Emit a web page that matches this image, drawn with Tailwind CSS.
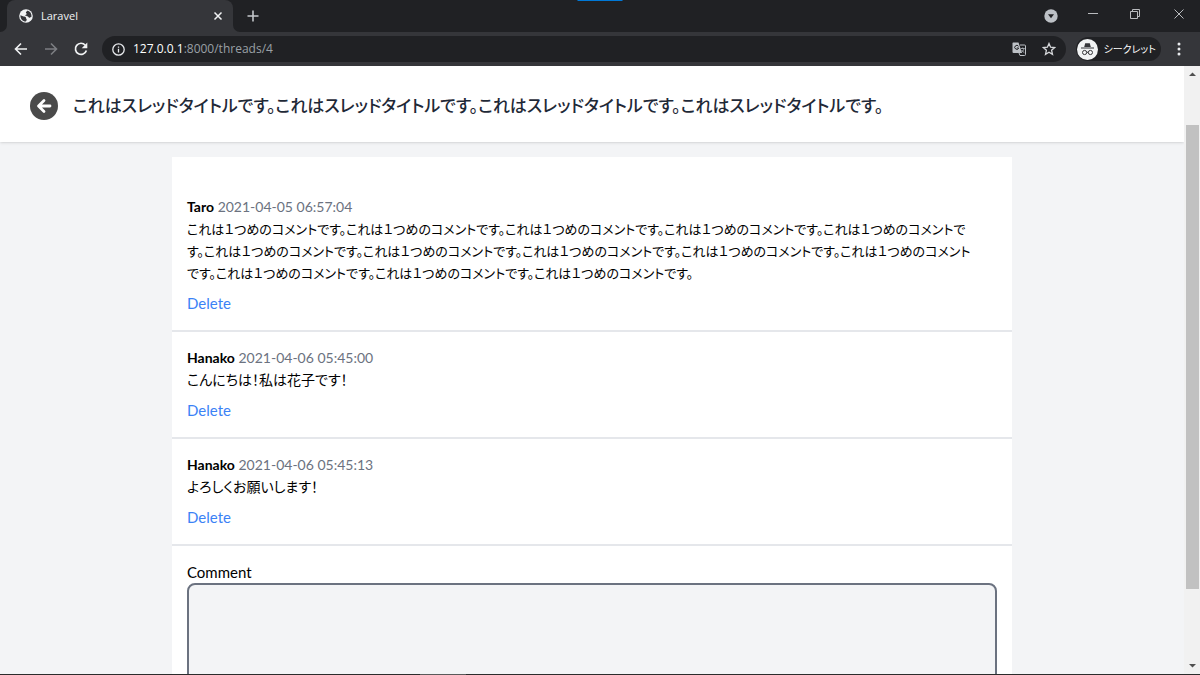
<!DOCTYPE html>
<html lang="ja">
<head>
  <meta charset="UTF-8" />
  <meta name="viewport" content="width=device-width, initial-scale=1.0" />
  <title>Laravel</title>
  <script src="https://cdn.jsdelivr.net/npm/@tailwindcss/browser@4"></script>
</head>
<body class="h-screen flex flex-col overflow-hidden bg-[#202124] font-['Lato','Noto_Sans_CJK_JP',sans-serif]">

  <!-- Tabs -->
  <div class="relative flex h-8 shrink-0 items-center bg-[#202124] font-['Open_Sans','Noto_Sans_CJK_JP',sans-serif]">
    <div class="absolute left-1/2 top-0 h-px w-[45px] -translate-x-1/2 bg-[#0078d7]"></div>
    <div class="relative ml-[7px] flex h-full w-[226px] items-center rounded-t-lg bg-[#35363a] pl-3 pr-[10px]">
      <svg class="absolute -left-[7px] bottom-0 size-[7px]" viewBox="0 0 7 7" fill="#35363a"><path d="M7 0v7H0a7 7 0 0 0 7-7z" /></svg>
      <svg class="absolute -right-[7px] bottom-0 size-[7px]" viewBox="0 0 7 7" fill="#35363a"><path d="M0 0v7h7a7 7 0 0 1-7-7z" /></svg>
      <svg class="size-[14px] shrink-0" viewBox="0 0 14 14">
        <circle cx="7" cy="7" r="6.8" fill="#f1f3f4" />
        <path d="M1.4 6.2 4 7.2c1 .3 1.9.3 2.6.9.6.6.2 1.5.9 2 .5.4.2 1.5-.7 2.4C3.8 12.6 1.2 9.9 1.4 6.2z" fill="#35363a" />
        <path d="M8.6 1.6c-.3 1-1.6.9-1.700 1.900-.1.8.9.8.8 1.500-.1.8-1.500.6-1.300 1.500.2.8 1.700.4 2.600.9.7.4.6 1.400 1.500 1.400.9 0 1.200-.8 2-1 .3-2.900-1.300-5.300-3.900-6.200z" fill="#35363a" />
      </svg>
      <span class="ml-2 grow text-[11px] text-[#f1f3f4]">Laravel</span>
      <button type="button" aria-label="Close tab" class="text-[#f1f3f4]">
        <svg class="size-[10px]" viewBox="0 0 10 10" fill="none" stroke="currentColor" stroke-width="1.5"><path d="M1.5 1.5l7 7M8.5 1.5l-7 7" /></svg>
      </button>
    </div>
    <button type="button" aria-label="New tab" class="ml-[14px] text-[#c4c7cb]">
      <svg class="size-3" viewBox="0 0 12 12" fill="none" stroke="currentColor" stroke-width="1.6"><path d="M6 .5v11M.5 6h11" /></svg>
    </button>
    <div class="ml-auto flex items-center pr-4 text-[#b9bbbe]">
      <button type="button" aria-label="Search tabs" class="mr-[30px]">
        <svg class="size-[14px]" viewBox="0 0 14 14"><circle cx="7" cy="7" r="6.7" fill="#bdc1c6" /><path d="M4 5.200h6L7 9.200z" fill="#202124" /></svg>
      </button>
      <button type="button" aria-label="Minimize" class="mr-8 mb-1">
        <svg class="size-[10px]" viewBox="0 0 10 10" stroke="currentColor"><path d="M0 4.500h10" /></svg>
      </button>
      <button type="button" aria-label="Restore" class="mr-[34px] mb-1">
        <svg class="size-[10px]" viewBox="0 0 10 10" fill="none" stroke="currentColor"><path d="M.5 2.500h7v7h-7zM2.500 2.500v-2h7v7h-2" /></svg>
      </button>
      <button type="button" aria-label="Close" class="mb-1">
        <svg class="size-[10px]" viewBox="0 0 10 10" fill="none" stroke="currentColor"><path d="M.5.5l9 9M9.500.5l-9 9" /></svg>
      </button>
    </div>
  </div>

  <!-- Toolbar -->
  <div class="flex h-[34px] shrink-0 items-center bg-[#35363a] pl-[14px] pr-[19px] font-['Open_Sans','Noto_Sans_CJK_JP',sans-serif]">
    <button type="button" aria-label="Back" class="text-[#f1f3f4]">
      <svg class="size-[14px]" viewBox="0 0 14 14" fill="none" stroke="currentColor" stroke-width="1.6"><path d="M13 7H1.800M7 1.500 1.500 7 7 12.500" /></svg>
    </button>
    <button type="button" aria-label="Forward" class="ml-4 text-[#7c7e82]">
      <svg class="size-[14px]" viewBox="0 0 14 14" fill="none" stroke="currentColor" stroke-width="1.6"><path d="M1 7h11.200M7 1.500 12.500 7 7 12.500" /></svg>
    </button>
    <button type="button" aria-label="Reload" class="ml-4 text-[#f1f3f4]">
      <svg class="size-[14px]" viewBox="0 0 14 14" fill="none"><path d="M11.300 3.200A5.600 5.600 0 1 0 12.400 8.500" stroke="currentColor" stroke-width="1.7" /><path d="M13.300.6v5.600H7.700z" fill="currentColor" /></svg>
    </button>
    <div class="ml-[14px] flex h-[26px] grow items-center rounded-full bg-[#202124] px-[10px]">
      <svg class="size-[13px] shrink-0 text-[#e8eaed]" viewBox="0 0 13 13" fill="none" stroke="currentColor" stroke-width="1.3"><circle cx="6.500" cy="6.500" r="5.700" /><path d="M6.500 5.800v3.600M6.500 3.400v1.400" /></svg>
      <p class="ml-2 grow text-xs text-[#9aa0a6]"><span class="text-white">127.0.0.1</span>:8000/threads/4</p>
      <button type="button" aria-label="Translate" class="mr-4">
        <svg class="size-[14px]" viewBox="0 0 14 14" fill="none">
          <path d="M1 .5h5.500L10 11H1.500A1 1 0 0 1 .5 10V1z" fill="#bdc1c6" />
          <path d="M6.500 4.300A2 2 0 1 0 6.700 6H4.800" stroke="#202124" />
          <path d="M8 3h4.500a1 1 0 0 1 1 1v8.500a1 1 0 0 1-1 1H8L7 11" stroke="#bdc1c6" />
          <path d="M8.700 6.500h4M10.700 5.500v1M12 6.500c-.4 1.800-1.500 3-2.600 3.800M9.500 8c.6 1 1.700 2 2.800 2.600" stroke="#bdc1c6" stroke-width=".8" />
        </svg>
      </button>
      <button type="button" aria-label="Bookmark" class="text-[#d5d7da]">
        <svg class="size-[14px]" viewBox="0 0 14 14" fill="none" stroke="currentColor" stroke-width="1.3"><path d="M7 1.500l1.600 3.700 4 .4-3 2.700.9 4L7 10.200l-3.500 2.100.9-4-3-2.700 4-.4z" /></svg>
      </button>
    </div>
    <div class="ml-[10px] flex h-6 items-center rounded-full bg-[#202124] pl-px pr-[5px]">
      <svg class="size-[21px]" viewBox="0 0 21 21" fill="none">
        <circle cx="10.500" cy="10.500" r="10.500" fill="#f1f3f4" />
        <path d="M7.200 8 8.200 4.300h4.600L13.800 8zM4 8.400h13v1H4z" fill="#35363a" />
        <circle cx="7.600" cy="13.500" r="2.100" stroke="#35363a" /><circle cx="13.400" cy="13.500" r="2.100" stroke="#35363a" /><path d="M9.700 13.300h1.600" stroke="#35363a" />
      </svg>
      <span class="ml-[6px] text-[10px] text-white [font-feature-settings:'palt']">シークレット</span>
    </div>
    <button type="button" aria-label="Menu" class="ml-4 text-[#e8eaed]">
      <svg class="h-[14px] w-1" viewBox="0 0 4 14" fill="currentColor"><circle cx="2" cy="2" r="1.500" /><circle cx="2" cy="7" r="1.500" /><circle cx="2" cy="12" r="1.500" /></svg>
    </button>
  </div>

  <div class="flex min-h-0 grow">
    <div class="min-w-0 grow overflow-hidden bg-[#f3f4f6] [font-feature-settings:'palt']">
      <header class="flex h-[76px] items-center bg-white px-[30px] pt-[3px] shadow">
        <a href="#" aria-label="Back to threads">
          <svg class="size-7" viewBox="0 0 28 28" fill="none"><circle cx="14" cy="14" r="14" fill="#4a4a4a" /><path d="M20 14H9M14 8.500 8.500 14l5.500 5.500" stroke="#fff" stroke-width="2.8" stroke-linecap="round" stroke-linejoin="round" /></svg>
        </a>
        <h2 class="ml-[15px] text-[17px] font-medium text-[#1f2937]">これはスレッドタイトルです。これはスレッドタイトルです。これはスレッドタイトルです。これはスレッドタイトルです。</h2>
      </header>

      <main class="mx-auto mt-[15px] max-w-[840px] bg-white pt-6 text-[15px] leading-[22px]">
        <article class="border-b-2 border-[#e5e7eb] p-[15px]">
          <p class="text-sm leading-[22px] text-[#6b7280]"><b class="text-black">Taro</b> <time>2021-04-05 06:57:04</time></p>
          <p class="text-[13px] leading-[22px]">
            これは１つめのコメントです。これは１つめのコメントです。これは１つめのコメントです。これは１つめのコメントです。これは１つめのコメントで<br />
            す。これは１つめのコメントです。これは１つめのコメントです。これは１つめのコメントです。これは１つめのコメントです。これは１つめのコメント<br />
            です。これは１つめのコメントです。これは１つめのコメントです。これは１つめのコメントです。
          </p>
          <button type="button" class="mt-2 block leading-[23px] text-[#3b82f6]">Delete</button>
        </article>
        <article class="border-b-2 border-[#e5e7eb] p-[15px]">
          <p class="text-sm leading-[22px] text-[#6b7280]"><b class="text-black">Hanako</b> <time>2021-04-06 05:45:00</time></p>
          <p class="text-sm leading-[22px]">こんにちは！私は花子です！</p>
          <button type="button" class="mt-2 block leading-[23px] text-[#3b82f6]">Delete</button>
        </article>
        <article class="border-b-2 border-[#e5e7eb] p-[15px]">
          <p class="text-sm leading-[22px] text-[#6b7280]"><b class="text-black">Hanako</b> <time>2021-04-06 05:45:13</time></p>
          <p class="text-sm leading-[22px]">よろしくお願いします！</p>
          <button type="button" class="mt-2 block leading-[23px] text-[#3b82f6]">Delete</button>
        </article>
        <form class="p-[15px]">
          <label for="comment" class="block">Comment</label>
          <textarea id="comment" rows="8" class="block w-full resize-none rounded-lg border-2 border-[#6b7280] bg-[#f3f4f6] p-2"></textarea>
        </form>
      </main>
    </div>

    <!-- Scrollbar -->
    <div class="flex w-4 shrink-0 flex-col items-center bg-[#f1f1f1] py-[6px]">
      <svg class="h-1 w-[7px]" viewBox="0 0 7 4" fill="#505050"><path d="M0 4 3.500.5 7 4z" /></svg>
      <div class="mt-[49px] h-7/9 w-[13px] bg-[#c1c1c1]"></div>
      <svg class="mt-auto h-1 w-[7px]" viewBox="0 0 7 4" fill="#505050"><path d="M0 0 3.500 3.500 7 0z" /></svg>
    </div>
  </div>

  <!-- Top edge of the taskbar -->
  <div class="h-px shrink-0 bg-[#2b2b2b]">
    <div class="ml-[35%] h-px w-[46px] bg-[#5a5a5a]"></div>
  </div>
</body>
</html>
